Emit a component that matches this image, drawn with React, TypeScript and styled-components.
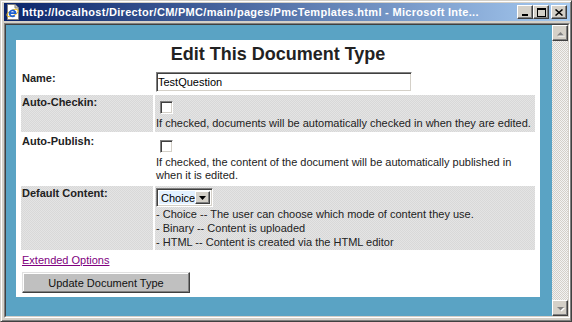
import React from 'react';
import styled, { createGlobalStyle, css } from 'styled-components';

const GlobalStyle = createGlobalStyle`
  html, body {
    margin: 0;
    padding: 0;
  }
  body {
    width: 572px;
    height: 322px;
    overflow: hidden;
    font-family: "Liberation Sans", Arial, sans-serif;
    font-size: 11px;
    color: #222;
  }
`;

const raised = css`
  background: #d4d0c8;
  border: 1px solid;
  border-color: #ffffff #404040 #404040 #ffffff;
  box-shadow: inset -1px -1px #808080, inset 1px 1px #d4d0c8;
`;

const sunken = css`
  border: 1px solid;
  border-color: #808080 #ffffff #ffffff #808080;
  box-shadow: inset 1px 1px #404040, inset -1px -1px #d4d0c8;
`;

const Window = styled.div`
  box-sizing: border-box;
  width: 572px;
  height: 322px;
  background: #d4d0c8;
  border: 1px solid;
  border-color: #d4d0c8 #404040 #404040 #d4d0c8;
  box-shadow: inset 1px 1px #ffffff, inset -1px -1px #808080;
  padding: 2px 1px 3px 3px;
  display: flex;
  flex-direction: column;
`;

const TitleBar = styled.div`
  height: 18px;
  display: flex;
  align-items: center;
  padding-left: 1px;
  background: linear-gradient(to right, #0a246a, #a6caf0);
`;

const TitleText = styled.div`
  flex: 1;
  margin-left: 1px;
  color: #ffffff;
  font-weight: bold;
  font-size: 11px;
  letter-spacing: 0.3px;
  white-space: nowrap;
  overflow: hidden;
`;

const TitleButtons = styled.div`
  display: flex;
  align-items: center;
  margin-right: 3px;
`;

const TitleButton = styled.div<{ $gap?: number }>`
  ${raised};
  box-sizing: border-box;
  width: 16px;
  height: 14px;
  margin-left: ${(p) => p.$gap ?? 0}px;
  display: flex;
  align-items: center;
  justify-content: center;
`;

const ClientEdge = styled.div`
  flex: 1;
  margin-top: 2px;
  display: flex;
  border: 1px solid;
  border-color: #808080 #ffffff #ffffff #808080;
`;

const ClientInner = styled.div`
  flex: 1;
  display: flex;
  border: 1px solid;
  border-color: #404040 #d4d0c8 #d4d0c8 #404040;
`;

const Viewport = styled.div`
  flex: 1;
  background: #5aa3c4;
  padding: 15px 12px 0 10px;
  overflow: hidden;
`;

const Scrollbar = styled.div`
  width: 16px;
  display: flex;
  flex-direction: column;
  background: repeating-conic-gradient(#d4d0c8 0 25%, #f2f2f2 0 50%) 0 0 / 2px 2px;
`;

const ScrollButton = styled.div`
  ${raised};
  box-sizing: border-box;
  width: 16px;
  height: 16px;
  display: flex;
  align-items: center;
  justify-content: center;
`;

const Track = styled.div`
  flex: 1;
`;

const Panel = styled.div`
  background: #ffffff;
  padding: 4px 3px 4px 3px;
`;

const Heading = styled.h1`
  margin: 0 0 4px;
  font-size: 18px;
  line-height: 21px;
  font-weight: bold;
  text-align: center;
  color: #222;
`;

const FormTable = styled.table`
  width: 100%;
  border-spacing: 2px;
  font-size: 11px;
`;

const Row = styled.tr<{ $shaded?: boolean }>`
  td {
    background: ${(p) =>
      p.$shaded
        ? 'repeating-conic-gradient(#d8d8d8 0 25%, #e4e4e4 0 50%) 0 0 / 2px 2px'
        : 'transparent'};
  }
`;

const LabelCell = styled.td`
  width: 130px;
  padding: 1px;
  vertical-align: top;
  font-weight: bold;
  line-height: 13px;
`;

const ValueCell = styled.td`
  padding: 1px;
  vertical-align: top;
`;

const TextInput = styled.input`
  ${sunken};
  display: block;
  box-sizing: border-box;
  width: 256px;
  height: 20px;
  margin: 0;
  padding: 0 1px;
  background: #ffffff;
  font-family: "Liberation Sans", Arial, sans-serif;
  font-size: 11px;
  color: #000;
  outline: none;
`;

const Checkbox = styled.input.attrs({ type: 'checkbox' })`
  ${sunken};
  appearance: none;
  display: block;
  box-sizing: border-box;
  width: 13px;
  height: 13px;
  margin: 5px 0 3px 4px;
  background: #ffffff;
`;

const Hint = styled.div`
  line-height: 13px;
  padding-bottom: 1px;
`;

const OptionList = styled.div`
  line-height: 14px;
`;

const Select = styled.div`
  ${sunken};
  box-sizing: border-box;
  width: 57px;
  height: 19px;
  margin-top: 1px;
  display: flex;
  padding: 2px;
  background: #ffffff;
`;

const SelectValue = styled.div`
  flex: 1;
  background: #e3f1ff;
  padding-left: 2px;
  line-height: 15px;
  color: #000;
`;

const SelectArrow = styled.div`
  ${raised};
  box-sizing: border-box;
  width: 15px;
  display: flex;
  align-items: center;
  justify-content: center;
`;

const OptionsLink = styled.a`
  display: block;
  margin: 2px 0 0 3px;
  line-height: 13px;
  color: #800080;
  text-decoration: underline;
`;

const SubmitButton = styled.button`
  display: block;
  box-sizing: border-box;
  width: 168px;
  height: 21px;
  margin: 5px 0 0 3px;
  padding: 0;
  background: #c0c0c0;
  border: 1px solid;
  border-color: #e0e0e0 #404040 #404040 #e0e0e0;
  box-shadow: inset -1px -1px #808080, inset 1px 1px #ffffff;
  font-family: "Liberation Sans", Arial, sans-serif;
  font-size: 11px;
  color: #111;
`;

function IeIcon() {
  return (
    <svg width="16" height="16" viewBox="0 0 16 16">
      <path d="M2.5 0.5H10L13.5 4V15.5H2.5Z" fill="#fff" stroke="#808080" />
      <path d="M10 0.5V4H13.5" fill="#d4d0c8" stroke="#808080" />
      <ellipse cx="7.5" cy="9" rx="6" ry="2.6" transform="rotate(-25 7.5 9)" fill="none" stroke="#e8b820" strokeWidth="1" />
      <path d="M4.5 9.2H10.6A3 3 0 1 0 9.8 11.4" fill="none" stroke="#1c5fd0" strokeWidth="1.8" />
    </svg>
  );
}

function Arrow({ down }: { down?: boolean }) {
  const pts = down ? '4,6 11,6 7.5,9.5' : '4,9.5 11,9.5 7.5,6';
  return (
    <svg width="14" height="14" viewBox="0 0 14 14">
      <polygon points={pts} transform="translate(1 1)" fill="#ffffff" />
      <polygon points={pts} fill="#808080" />
    </svg>
  );
}

export default function App() {
  return (
    <>
      <GlobalStyle />
      <Window>
        <TitleBar>
          <IeIcon />
          <TitleText>http://localhost/Director/CM/PMC/main/pages/PmcTemplates.html - Microsoft Inte...</TitleText>
          <TitleButtons>
            <TitleButton>
              <svg width="8" height="8" viewBox="0 0 8 8">
                <rect x="1" y="6" width="6" height="2" fill="#000" />
              </svg>
            </TitleButton>
            <TitleButton>
              <svg width="9" height="9" viewBox="0 0 9 9">
                <rect x="0.5" y="0.5" width="8" height="8" fill="none" stroke="#000" />
                <rect x="0" y="0" width="9" height="2" fill="#000" />
              </svg>
            </TitleButton>
            <TitleButton $gap={2}>
              <svg width="8" height="7" viewBox="0 0 8 7">
                <path d="M0.5 0.5L7.5 6.5M7.5 0.5L0.5 6.5" stroke="#000" strokeWidth="1.5" />
              </svg>
            </TitleButton>
          </TitleButtons>
        </TitleBar>
        <ClientEdge>
          <ClientInner>
            <Viewport>
              <Panel>
                <Heading>Edit This Document Type</Heading>
                <FormTable>
                  <tbody>
                    <Row>
                      <LabelCell>Name:</LabelCell>
                      <ValueCell>
                        <TextInput defaultValue="TestQuestion" />
                      </ValueCell>
                    </Row>
                    <Row $shaded>
                      <LabelCell>Auto-Checkin:</LabelCell>
                      <ValueCell>
                        <Checkbox />
                        <Hint>If checked, documents will be automatically checked in when they are edited.</Hint>
                      </ValueCell>
                    </Row>
                    <Row>
                      <LabelCell>Auto-Publish:</LabelCell>
                      <ValueCell>
                        <Checkbox />
                        <Hint>
                          If checked, the content of the document will be automatically published in
                          <br />
                          when it is edited.
                        </Hint>
                      </ValueCell>
                    </Row>
                    <Row $shaded>
                      <LabelCell>Default Content:</LabelCell>
                      <ValueCell>
                        <Select>
                          <SelectValue>Choice</SelectValue>
                          <SelectArrow>
                            <svg width="7" height="4" viewBox="0 0 7 4">
                              <polygon points="0,0 7,0 3.5,4" fill="#000" />
                            </svg>
                          </SelectArrow>
                        </Select>
                        <OptionList>
                          <div>- Choice -- The user can choose which mode of content they use.</div>
                          <div>- Binary -- Content is uploaded</div>
                          <div>- HTML -- Content is created via the HTML editor</div>
                        </OptionList>
                      </ValueCell>
                    </Row>
                  </tbody>
                </FormTable>
                <OptionsLink href="#">Extended Options</OptionsLink>
                <SubmitButton type="button">Update Document Type</SubmitButton>
              </Panel>
            </Viewport>
            <Scrollbar>
              <ScrollButton>
                <Arrow />
              </ScrollButton>
              <Track />
              <ScrollButton>
                <Arrow down />
              </ScrollButton>
            </Scrollbar>
          </ClientInner>
        </ClientEdge>
      </Window>
    </>
  );
}
